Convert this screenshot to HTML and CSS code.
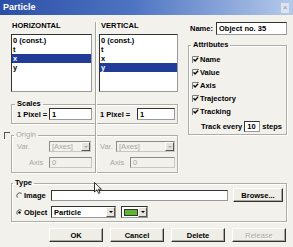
FILE: index.html
```html
<!DOCTYPE html>
<html lang="en">
<head>
    <meta charset="UTF-8">
    <meta name="viewport" content="width=device-width, initial-scale=1.0">
    <title>Particle</title>
    <link rel="stylesheet" href="styles.css">
</head>
<body>
<div class="window">
    <div class="titlebar">
        <span class="title">Particle</span>
        <span class="close">×</span>
    </div>

    <div class="upper">
        <div class="axes">
            <div class="axis-label col-h">HORIZONTAL</div>
            <div class="axis-label col-v">VERTICAL</div>
            <ul class="listbox col-h">
                <li>0 (const.)</li>
                <li>t</li>
                <li class="selected">x</li>
                <li>y</li>
            </ul>
            <ul class="listbox col-v">
                <li>0 (const.)</li>
                <li>t</li>
                <li>x</li>
                <li class="selected">y</li>
            </ul>

            <fieldset class="group scales">
                <legend>Scales</legend>
                <div class="halves">
                    <div class="row half-h">
                        <span class="lbl pix-h">1 Pixel =</span>
                        <span class="field pix-h-field">1</span>
                    </div>
                    <div class="row half-v">
                        <span class="lbl pix-v">1 Pixel =</span>
                        <span class="field pix-v-field">1</span>
                    </div>
                </div>
            </fieldset>

            <span class="origin-check"></span>
            <fieldset class="group origin disabled">
                <legend>Origin</legend>
                <div class="halves">
                    <div class="stack half-h">
                        <div class="row">
                            <span class="lbl var-h">Var.</span>
                            <span class="field combo var-h-combo">[Axes]<span class="drop"><i></i></span></span>
                        </div>
                        <div class="row">
                            <span class="lbl axis-h">Axis</span>
                            <span class="field axis-h-field">0</span>
                        </div>
                    </div>
                    <div class="stack half-v">
                        <div class="row">
                            <span class="lbl var-v">Var.</span>
                            <span class="field combo var-v-combo">[Axes]<span class="drop"><i></i></span></span>
                        </div>
                        <div class="row">
                            <span class="lbl axis-v">Axis</span>
                            <span class="field axis-v-field">0</span>
                        </div>
                    </div>
                </div>
            </fieldset>

            <div class="splitter"></div>
        </div>

        <div class="props">
            <div class="name-row">
                <span class="lbl name-lbl">Name:</span>
                <span class="field name-field">Object no. 35</span>
            </div>
            <fieldset class="group attributes">
                <legend>Attributes</legend>
                <div class="checks">
                    <div class="check-row">
                        <svg class="check" viewBox="0 0 7 7"><path d="M0.5 7V0.5H7" stroke="#808080" fill="none"/><path d="M1.5 3.3l1.6 1.7 3-3.2" stroke="#000" stroke-width="1.3" fill="none"/></svg>Name
                    </div>
                    <div class="check-row">
                        <svg class="check" viewBox="0 0 7 7"><path d="M0.5 7V0.5H7" stroke="#808080" fill="none"/><path d="M1.5 3.3l1.6 1.7 3-3.2" stroke="#000" stroke-width="1.3" fill="none"/></svg>Value
                    </div>
                    <div class="check-row">
                        <svg class="check" viewBox="0 0 7 7"><path d="M0.5 7V0.5H7" stroke="#808080" fill="none"/><path d="M1.5 3.3l1.6 1.7 3-3.2" stroke="#000" stroke-width="1.3" fill="none"/></svg>Axis
                    </div>
                    <div class="check-row">
                        <svg class="check" viewBox="0 0 7 7"><path d="M0.5 7V0.5H7" stroke="#808080" fill="none"/><path d="M1.5 3.3l1.6 1.7 3-3.2" stroke="#000" stroke-width="1.3" fill="none"/></svg>Trajectory
                    </div>
                    <div class="check-row">
                        <svg class="check" viewBox="0 0 7 7"><path d="M0.5 7V0.5H7" stroke="#808080" fill="none"/><path d="M1.5 3.3l1.6 1.7 3-3.2" stroke="#000" stroke-width="1.3" fill="none"/></svg>Tracking
                    </div>
                    <div class="track-row">
                        Track every <span class="field track-field">10</span> steps
                    </div>
                </div>
            </fieldset>
        </div>
    </div>

    <fieldset class="group type">
        <legend>Type</legend>
        <div class="type-body">
            <div class="type-row image-row">
                <span class="radio-lbl">
                    <svg class="radio" viewBox="0 0 7 7"><path d="M5.6 1.4A3 3 0 0 0 1.4 5.6" stroke="#555" fill="none"/></svg>Image
                </span>
                <span class="field image-field"></span>
                <span class="button browse">Browse...</span>
            </div>
            <div class="type-row object-row">
                <span class="radio-lbl">
                    <svg class="radio" viewBox="0 0 7 7"><path d="M5.6 1.4A3 3 0 0 0 1.4 5.6" stroke="#555" fill="none"/><circle cx="3.5" cy="3.5" r="1.2" fill="#000"/></svg>Object
                </span>
                <span class="field combo object-combo">Particle<span class="drop"><i></i></span></span>
                <span class="field combo color-combo"><span class="swatch"></span><span class="drop"><i></i></span></span>
            </div>
        </div>
    </fieldset>

    <div class="buttons">
        <span class="button">OK</span>
        <span class="button">Cancel</span>
        <span class="button">Delete</span>
        <span class="button disabled-btn">Release</span>
    </div>

    <svg class="cursor" viewBox="0 0 8 12"><path d="M0.5 0.5V10L2.8 7.8L4.6 11.4L6 10.7L4.3 7.2H7.4Z" fill="#fff" stroke="#000" stroke-width="0.8"/></svg>
</div>
</body>
</html>
```

FILE: styles.css
```css
* {
    box-sizing: border-box;
}
body {
    margin: 0;
    background: #f2f1ec;
    font-family: "Liberation Sans", Arial, sans-serif;
    font-size: 7.5px;
    font-weight: bold;
    color: #000;
}
.window {
    position: relative;
    width: 293px;
    height: 247px;
    overflow: hidden;
    background: #f2f1ec;
}

/* title bar */
.titlebar {
    height: 15px;
    display: flex;
    align-items: center;
    justify-content: space-between;
    padding: 0 4px 0 3px;
    background: linear-gradient(90deg, #2b4fa6 0%, #4d74c2 45%, #b5caea 100%);
    color: #fff;
}
.title {
    font-size: 9px;
    line-height: 15px;
}
.close {
    width: 8px;
    height: 10px;
    background: #dfe3ee;
    color: #8a93aa;
    font-size: 8px;
    line-height: 10px;
    text-align: center;
    font-weight: normal;
}

/* upper part */
.upper {
    display: flex;
}
.axes {
    display: grid;
    grid-template-columns: 11px 81px 7px 79px;
    align-items: start;
    padding-top: 7px;
}
.col-h {
    grid-column: 2;
}
.col-v {
    grid-column: 4;
}
.axis-label {
    grid-row: 1;
    height: 8px;
    line-height: 8px;
}
.axis-label.col-h {
    padding-left: 1px;
}
.axis-label.col-v {
    padding-left: 2px;
}
.listbox {
    grid-row: 2;
    height: 58px;
    margin: 4px 0 0;
    padding: 1px 0 0;
    list-style: none;
    background: #fff;
    border: 1px solid;
    border-color: #333 #999 #999 #333;
}
.listbox li {
    height: 9px;
    line-height: 9px;
    padding-left: 1px;
}
.listbox li.selected {
    background: #203c98;
    color: #fff;
}

/* group boxes */
.group {
    margin: 0;
    padding: 0;
    min-width: 0;
    border: 1px solid #aeada6;
    box-shadow: inset 1px 1px #fff, 1px 1px #fff;
}
.group legend {
    padding: 0 2px;
    line-height: 8px;
}
.halves {
    display: grid;
    grid-template-columns: 80px 7px 78px;
}
.half-h {
    grid-column: 1;
}
.half-v {
    grid-column: 3;
}
.row {
    display: flex;
    align-items: center;
}
.lbl {
    flex: none;
    white-space: nowrap;
}

.scales {
    grid-row: 3;
    grid-column: 2 / 5;
    margin-top: 8px;
}
.scales legend {
    margin-left: 3px;
}
.scales .halves {
    padding-bottom: 3px;
}
.scales .row {
    height: 12px;
}
.pix-h {
    width: 37px;
    padding-left: 5px;
}
.pix-h-field {
    width: 43px;
}
.pix-v {
    width: 38px;
    padding-left: 1px;
}
.pix-v-field {
    width: 38px;
}

.origin-check {
    grid-row: 4;
    grid-column: 1;
    width: 6px;
    height: 7px;
    margin: 8px 0 0 4px;
    border-top: 1px solid #555;
    border-left: 1px solid #555;
}
.origin {
    grid-row: 4;
    grid-column: 2 / 5;
    margin-top: 7px;
}
.origin legend {
    margin-left: 2px;
}
.origin .halves {
    padding: 2px 0 4px;
}
.stack {
    display: flex;
    flex-direction: column;
    gap: 5px;
}
.stack .row {
    height: 11px;
}
.var-h {
    width: 37px;
    padding-left: 5px;
}
.var-h-combo {
    width: 42px;
}
.axis-h {
    width: 37px;
    padding-left: 17px;
}
.axis-h-field {
    width: 43px;
}
.var-v {
    width: 17px;
    padding-left: 1px;
}
.var-v-combo {
    width: 59px;
}
.axis-v {
    width: 31px;
    padding-left: 11px;
}
.axis-v-field {
    width: 45px;
}
.disabled {
    color: #a9a8a2;
    font-weight: normal;
}
.disabled .field {
    background: #f2f1ec;
    border-color: #8a8a86 #c8c8c2 #c8c8c2 #8a8a86;
}
.disabled .drop i {
    border-top-color: #a9a8a2;
}

.splitter {
    grid-row: 1 / 5;
    grid-column: 3;
    align-self: stretch;
    width: 2px;
    margin-left: 3px;
    border-left: 1px solid #a8a7a0;
    border-right: 1px solid #fff;
}

/* fields */
.field {
    display: flex;
    align-items: center;
    height: 100%;
    padding-left: 2px;
    background: #fff;
    border: 1px solid;
    border-color: #333 #999 #999 #333;
    white-space: nowrap;
}
.combo {
    padding-right: 0;
}
.drop {
    display: flex;
    align-items: center;
    justify-content: center;
    flex: none;
    width: 9px;
    height: 100%;
    margin-left: auto;
    background: #e6e4da;
    border: 1px solid;
    border-color: #fff #555 #555 #fff;
}
.drop i {
    border-left: 2px solid transparent;
    border-right: 2px solid transparent;
    border-top: 2px solid #000;
}

/* right column */
.props {
    width: 99px;
    margin-left: 10px;
    padding-top: 7px;
}
.name-row {
    display: flex;
    align-items: center;
    height: 13px;
}
.name-lbl {
    width: 28px;
    padding-left: 2px;
}
.name-field {
    width: 71px;
}
.attributes {
    height: 94px;
    margin-top: 6px;
}
.attributes legend {
    margin-left: 2px;
}
.checks {
    padding: 4px 0 0 3px;
}
.check-row {
    display: flex;
    align-items: center;
    height: 13px;
}
.check {
    width: 7px;
    height: 7px;
    margin-right: 1px;
}
.track-row {
    display: flex;
    align-items: center;
    gap: 2px;
    height: 13px;
    margin-top: 2px;
    padding-left: 9px;
}
.track-field {
    width: 16px;
    height: 11px;
}

/* type */
.type {
    width: 276px;
    margin: 6px 0 0 11px;
}
.type legend {
    margin-left: 1px;
}
.type-body {
    padding: 1px 0 3px 4px;
}
.type-row {
    display: flex;
    align-items: center;
}
.image-row {
    height: 14px;
}
.object-row {
    height: 12px;
    margin-top: 4px;
}
.radio-lbl {
    display: flex;
    align-items: center;
    width: 35px;
}
.radio {
    width: 7px;
    height: 7px;
    margin-right: 1px;
}
.image-field {
    width: 177px;
    height: 11px;
}
.object-combo {
    width: 65px;
}
.color-combo {
    width: 27px;
    margin-left: 5px;
}
.swatch {
    width: 16px;
    height: 7px;
    background: #5fb52f;
    border: 1px solid #333;
}

/* buttons */
.button {
    display: flex;
    align-items: center;
    justify-content: center;
    width: 54px;
    height: 14px;
    background: #efeee6;
    border: 1px solid;
    border-color: #fff #333 #333 #fff;
    box-shadow: inset -1px -1px #a8a8a0;
}
.browse {
    width: 50px;
    margin-left: 5px;
}
.buttons {
    display: flex;
    gap: 7px;
    margin-top: 6px;
    padding-left: 49px;
}
.disabled-btn {
    color: #a9a8a2;
    font-weight: normal;
    text-shadow: 1px 1px #fff;
}

.cursor {
    position: absolute;
    left: 94px;
    top: 182px;
    width: 8px;
    height: 12px;
}
```
